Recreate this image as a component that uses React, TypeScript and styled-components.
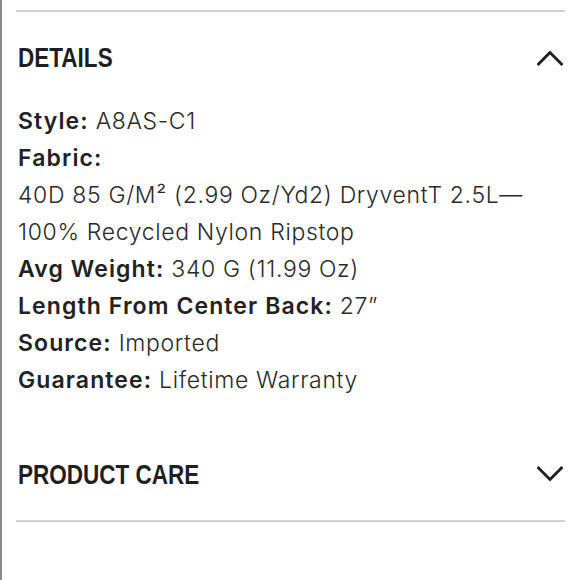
import React from "react"
import styled, { createGlobalStyle } from "styled-components"

const GlobalStyle = createGlobalStyle`
    html, body {
        margin: 0;
        padding: 0;
        background: #ffffff;
    }
`

const Page = styled.div`
    box-sizing: border-box;
    width: 580px;
    height: 580px;
    border-left: 2px solid #8c8c8c;
    padding: 10px 15px 0 14px;
    background: #ffffff;
`

const Accordion = styled.div`
    border-top: 2px solid #d0d0d0;
    border-bottom: 2px solid #d0d0d0;
`

const Header = styled.div<{ height: number }>`
    height: ${({ height }) => height}px;
    display: flex;
    align-items: center;
    justify-content: space-between;
    padding-left: 2px;
`

/* condensed grotesk headline: no condensed face is installed, so squeeze a bold sans */
const Title = styled.h2`
    margin: 0;
    font-family: "Liberation Sans", Arial, sans-serif;
    font-weight: 700;
    font-size: 28.5px;
    color: #1f1f1f;
    transform: scaleX(0.79);
    transform-origin: left center;
    white-space: nowrap;
`

const Chevron = styled.svg`
    width: 26px;
    height: 16px;
    margin-right: 2px;
`

const Content = styled.div`
    padding: 0 0 29px 2px;
    font-family: Inter, "Liberation Sans", sans-serif;
    font-size: 23px;
    line-height: 37px;
    color: #2e2e2e;
`

const Row = styled.div`
    white-space: nowrap;
`

const Label = styled.span`
    font-weight: 600;
    letter-spacing: 1.1px;
    color: #222222;
`

const Value = styled.span`
    font-weight: 300;
    letter-spacing: 0.65px;
    color: #2a2a2a;
`

function ChevronIcon({ up }: { up: boolean }) {
    return (
        <Chevron viewBox="0 0 26 16" aria-hidden="true">
            <polyline
                points={up ? "1.5,14 13,2.5 24.5,14" : "1.5,2 13,13.5 24.5,2"}
                fill="none"
                stroke="#222222"
                strokeWidth="3"
                strokeLinecap="square"
            />
        </Chevron>
    )
}

const details: { label?: string; value: string }[] = [
    { label: "Style", value: "A8AS-C1" },
    { label: "Fabric", value: "" },
    { value: "40D 85 G/M² (2.99 Oz/Yd2) DryventT 2.5L—" },
    { value: "100% Recycled Nylon Ripstop" },
    { label: "Avg Weight", value: "340 G (11.99 Oz)" },
    { label: "Length From Center Back", value: "27”" },
    { label: "Source", value: "Imported" },
    { label: "Guarantee", value: "Lifetime Warranty" },
]

export default function App() {
    return (
        <>
            <GlobalStyle />
            <Page>
                <Accordion>
                    <section>
                        <Header height={91}>
                            <Title>DETAILS</Title>
                            <ChevronIcon up />
                        </Header>
                        <Content>
                            {details.map((item, i) => (
                                <Row key={i}>
                                    {item.label ? <Label>{item.label}: </Label> : null}
                                    <Value>{item.value}</Value>
                                </Row>
                            ))}
                        </Content>
                    </section>
                    <section>
                        <Header height={92}>
                            <Title>PRODUCT CARE</Title>
                            <ChevronIcon up={false} />
                        </Header>
                    </section>
                </Accordion>
            </Page>
        </>
    )
}
